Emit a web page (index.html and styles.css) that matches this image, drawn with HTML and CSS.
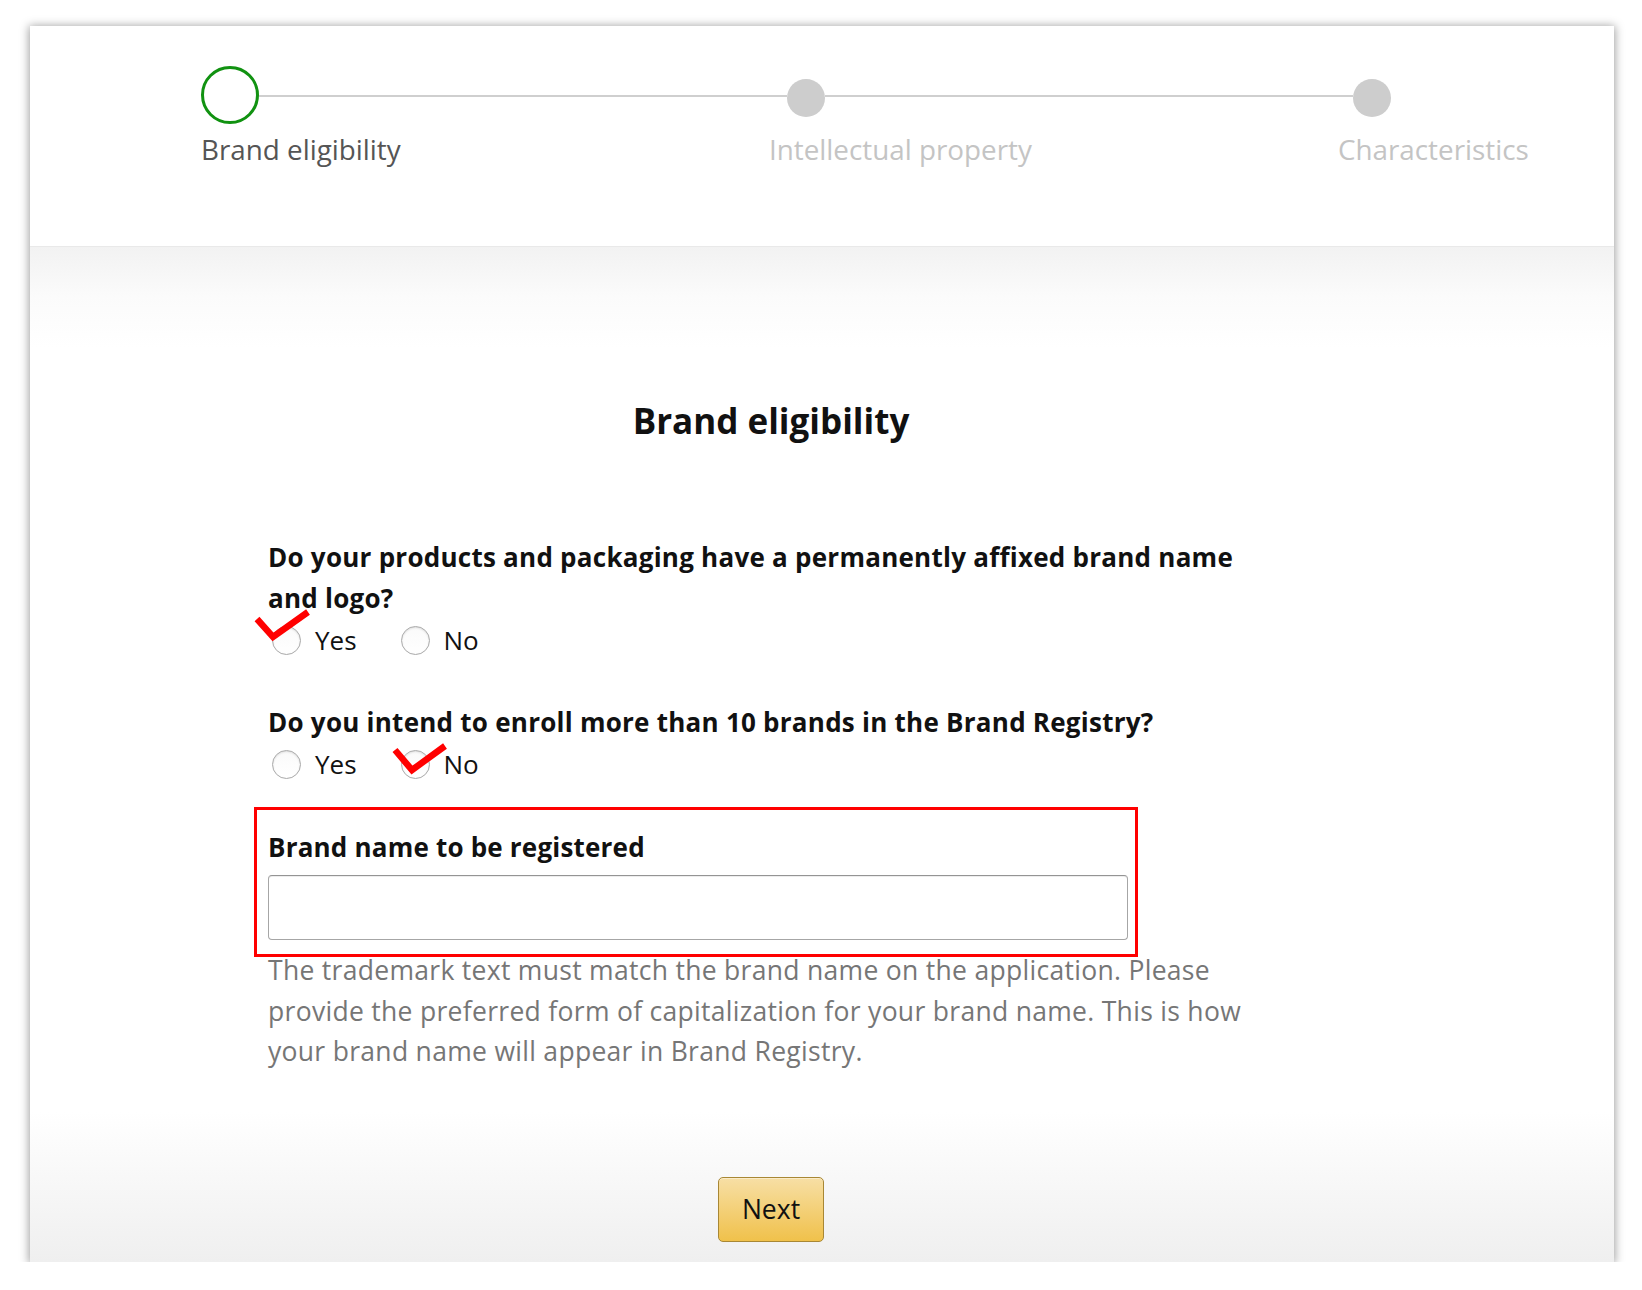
FILE: index.html
```html
<!DOCTYPE html>
<html lang="en">
<head>
<meta charset="utf-8">
<title>Brand eligibility</title>
<link rel="stylesheet" href="styles.css">
</head>
<body>
<div class="card">
  <header class="header">
    <div class="stepper">
      <span class="dot dot-active"></span>
      <span class="track"></span>
      <span class="dot"></span>
      <span class="track"></span>
      <span class="dot"></span>
    </div>
    <div class="step-labels">
      <span class="step-label step-label-active">Brand eligibility</span>
      <span class="step-label">Intellectual property</span>
      <span class="step-label">Characteristics</span>
    </div>
  </header>
  <main class="body">
    <div class="column">
      <h1 class="title">Brand eligibility</h1>

      <div class="question">
        <p class="q-text">Do your products and packaging have a permanently affixed brand name and logo?</p>
        <div class="radios">
          <label class="radio">
            <span class="radio-circle"></span>
            <span class="radio-text">Yes</span>
            <svg class="check check-1" width="60" height="40" viewBox="0 0 60 40"><polyline points="3,13 19,31 54,6" fill="none" stroke="#f00" stroke-width="6.5"/></svg>
          </label>
          <label class="radio">
            <span class="radio-circle"></span>
            <span class="radio-text">No</span>
          </label>
        </div>
      </div>

      <div class="question">
        <p class="q-text">Do you intend to enroll more than 10 brands in the Brand Registry?</p>
        <div class="radios">
          <label class="radio">
            <span class="radio-circle"></span>
            <span class="radio-text">Yes</span>
          </label>
          <label class="radio">
            <span class="radio-circle"></span>
            <span class="radio-text">No</span>
            <svg class="check check-2" width="60" height="40" viewBox="0 0 60 40"><polyline points="3,7 20,27 53,3" fill="none" stroke="#f00" stroke-width="6.5"/></svg>
          </label>
        </div>
      </div>

      <div class="field">
        <label class="field-label" for="brand">Brand name to be registered</label>
        <input class="field-input" id="brand" type="text">
        <span class="highlight"></span>
      </div>
      <p class="hint">The trademark text must match the brand name on the application. Please provide the preferred form of capitalization for your brand name. This is how your brand name will appear in Brand Registry.</p>

      <div class="actions">
        <button class="btn-next" type="button">Next</button>
      </div>
    </div>
  </main>
</div>
</body>
</html>
```

FILE: styles.css
```css
html, body {
  margin: 0;
  padding: 0;
  background: #fff;
}

body {
  font-family: "Open Sans", "Noto Sans", sans-serif;
  color: #111;
}

.card {
  margin: 26px 0 0 30px;
  width: 1584px;
  height: 1236px;
  background: #fff;
  box-shadow: 0 1px 9px 1px rgba(0, 0, 0, 0.38);
  display: flex;
  flex-direction: column;
}

.header {
  height: 221px;
  flex: none;
  box-sizing: border-box;
  padding: 37px 0 0 171px;
  border-bottom: 1px solid #e9e9e9;
}

.stepper {
  display: flex;
  align-items: center;
  width: 1190px;
  height: 64px;
}

.dot {
  flex: none;
  width: 38px;
  height: 38px;
  margin-top: 6px;
  border-radius: 50%;
  background: #cdcdcd;
}

.dot-active {
  width: 52px;
  height: 52px;
  margin-top: 0;
  background: #fff;
  border: 3.5px solid #119211;
}

.track {
  flex: 1;
  height: 2px;
  margin-top: 2px;
  background: #cfcfcf;
}

.step-labels {
  display: grid;
  grid-template-columns: 568px 569px auto;
  margin-top: 2px;
}

.step-label {
  font-size: 27.8px;
  line-height: 40px;
  color: #c4c4c4;
}

.step-label-active {
  color: #555;
}

.body {
  flex: 1;
  background: linear-gradient(#f2f2f2 0, #fbfbfb 50px, #fff 100px, #fff calc(100% - 150px), #efefef 100%);
}

.column {
  width: 1006px;
  margin-left: 238px;
  padding-top: 150px;
}

.title {
  margin: 0;
  text-align: center;
  font-size: 35px;
  line-height: 48px;
  font-weight: 700;
  color: #111;
}

.question {
  margin-top: 44px;
}

.title + .question {
  margin-top: 92px;
}

.q-text {
  margin: 0;
  font-size: 26px;
  line-height: 41px;
  font-weight: 700;
  letter-spacing: 0.25px;
  color: #111;
}

.radios {
  display: flex;
  gap: 40px;
  margin-top: 3px;
  height: 36px;
  align-items: center;
}

.radio {
  position: relative;
  display: flex;
  align-items: center;
  gap: 14px;
  padding-left: 4px;
}

.radio-circle {
  width: 27px;
  height: 27px;
  border-radius: 50%;
  border: 1px solid #a9a9a9;
  background: linear-gradient(#fafafa, #fff);
  box-shadow: inset 0 1px 2px rgba(0, 0, 0, 0.12);
}

.radio-text {
  font-size: 26px;
  line-height: 36px;
  color: #111;
}

.check {
  position: absolute;
  pointer-events: none;
}

.check-1 {
  left: -14px;
  top: -16px;
}

.check-2 {
  left: -5px;
  top: -3px;
}

.field {
  position: relative;
  margin-top: 45px;
}

.field-label {
  display: block;
  font-size: 26px;
  line-height: 41px;
  font-weight: 700;
  letter-spacing: 0.2px;
  color: #111;
}

.field-input {
  display: block;
  box-sizing: border-box;
  width: 860px;
  height: 65px;
  margin-top: 7px;
  border: 1px solid #a6a6a6;
  border-top-color: #949494;
  border-radius: 4px;
  box-shadow: inset 0 1px 0 rgba(0, 0, 0, 0.07);
  background: #fff;
  font: inherit;
}

.highlight {
  position: absolute;
  left: -14px;
  top: -20px;
  width: 878px;
  height: 144px;
  border: 3px solid #f00;
  pointer-events: none;
}

.hint {
  margin: 10px 0 0;
  font-size: 26.5px;
  line-height: 40.5px;
  letter-spacing: 0.3px;
  color: #767676;
}

.actions {
  display: flex;
  justify-content: center;
  margin-top: 105px;
}

.btn-next {
  width: 106px;
  height: 65px;
  border: 1px solid #a88734;
  border-radius: 5px;
  background: linear-gradient(#f7dfa5, #f0c14b);
  box-shadow: inset 0 1px 0 rgba(255, 255, 255, 0.4);
  font-family: "Open Sans", "Noto Sans", sans-serif;
  font-size: 26.5px;
  color: #111;
  padding: 0;
}
```
